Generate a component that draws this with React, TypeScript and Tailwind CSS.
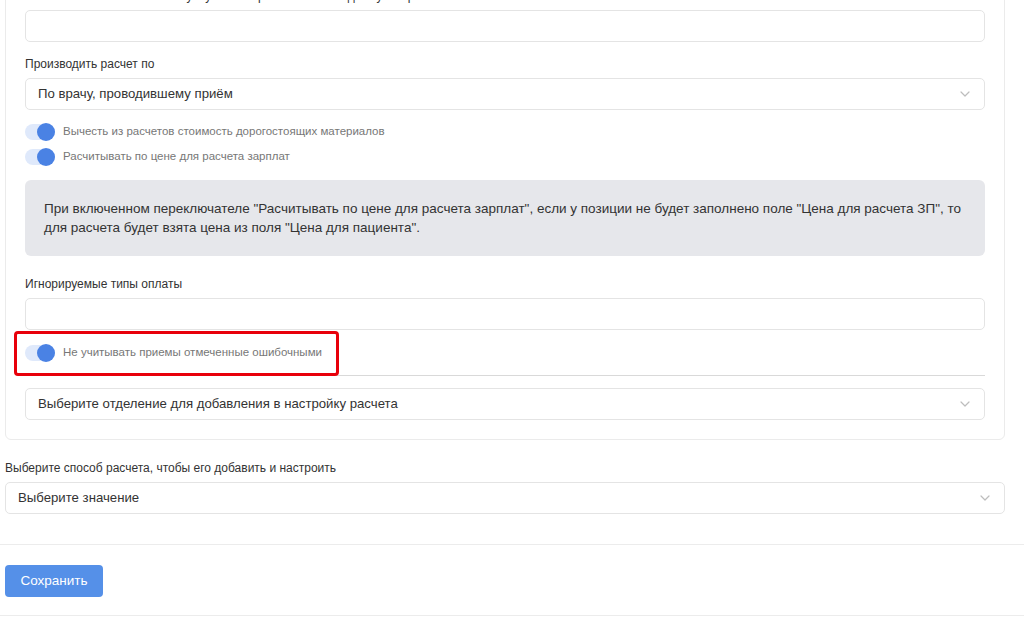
import React from "react";

const Chevron = () => (
  <svg width="10" height="6" viewBox="0 0 10 6" fill="none" className="shrink-0">
    <path d="M1 1l4 4 4-4" stroke="#bdbdbd" strokeWidth="1.2" strokeLinecap="round" strokeLinejoin="round" />
  </svg>
);

const Toggle = ({ label }: { label: string }) => (
  <div className="flex items-center h-[20px]">
    <div className="relative w-[30px] h-[16px] rounded-full bg-[#dfe9fb]">
      <div className="absolute right-0 top-[-1px] w-[18px] h-[18px] rounded-full bg-[#4a82e4]" />
    </div>
    <span className="ml-[8px] text-[11.5px] text-[#777]">{label}</span>
  </div>
);

const Select = ({ value, pad = "pr-[14px]" }: { value: string; pad?: string }) => (
  <div className={`h-[32px] border border-[#e4e4e4] rounded-[5px] bg-white flex items-center justify-between pl-[12px] ${pad}`}>
    <span className="text-[13.2px] text-[#333]">{value}</span>
    <Chevron />
  </div>
);

const Label = ({ children }: { children: React.ReactNode }) => (
  <div className="text-[12px] leading-[16px] text-[#333] mb-[6px]">{children}</div>
);

export default function App() {
  return (
    <div className="w-[1024px] h-[617px] overflow-hidden bg-white font-['Liberation_Sans',Arial,sans-serif]">
      <div className="px-[5px] w-[1010px]">
        <div className="mt-[-21px] border border-[#ebebeb] rounded-[6px] px-[19px] pt-[8px] pb-[19px]">
          <Label>Учитывать в ЗП только если услуга была рассчитана по одному из прайс-листов</Label>
          <div className="h-[32px] border border-[#e4e4e4] rounded-[5px] bg-white" />

          <div className="mt-[14px]">
            <Label>Производить расчет по</Label>
            <Select value="По врачу, проводившему приём" />
          </div>

          <div className="mt-[12px] flex flex-col gap-[5px]">
            <Toggle label="Вычесть из расчетов стоимость дорогостоящих материалов" />
            <Toggle label="Расчитывать по цене для расчета зарплат" />
          </div>

          <div className="mt-[13px] bg-[#e6e7eb] rounded-[6px] px-[19px] pt-[19px] pb-[19px] text-[13.5px] leading-[19px] text-[#333]">
            При включенном переключателе "Расчитывать по цене для расчета зарплат", если у позиции не будет заполнено поле "Цена для расчета ЗП", то для расчета будет взята цена из поля "Цена для пациента".
          </div>

          <div className="mt-[20px]">
            <Label>Игнорируемые типы оплаты</Label>
            <div className="h-[32px] border border-[#e4e4e4] rounded-[5px] bg-white" />
          </div>

          <div className="relative mt-[13px]">
            <Toggle label="Не учитывать приемы отмеченные ошибочными" />
            <div className="absolute left-[-11px] top-[-12px] w-[325px] h-[45px] border-[3px] border-[#e8000b] rounded-[4px] pointer-events-none" />
          </div>

          <div className="mt-[12px] border-t border-[#d9d9d9]" />

          <div className="mt-[12px]">
            <Select value="Выберите отделение для добавления в настройку расчета" />
          </div>
        </div>

        <div className="mt-[20px]">
          <Label>Выберите способ расчета, чтобы его добавить и настроить</Label>
          <Select value="Выберите значение" />
        </div>
      </div>

      <div className="mt-[30px] border-t border-[#ececec]" />
      <div className="px-[5px] pt-[20px] pb-[18px]">
        <button className="h-[32px] w-[98px] rounded-[4px] bg-[#5590e8] text-white text-[13.5px]">Сохранить</button>
      </div>
      <div className="border-t border-[#ececec]" />
    </div>
  );
}
